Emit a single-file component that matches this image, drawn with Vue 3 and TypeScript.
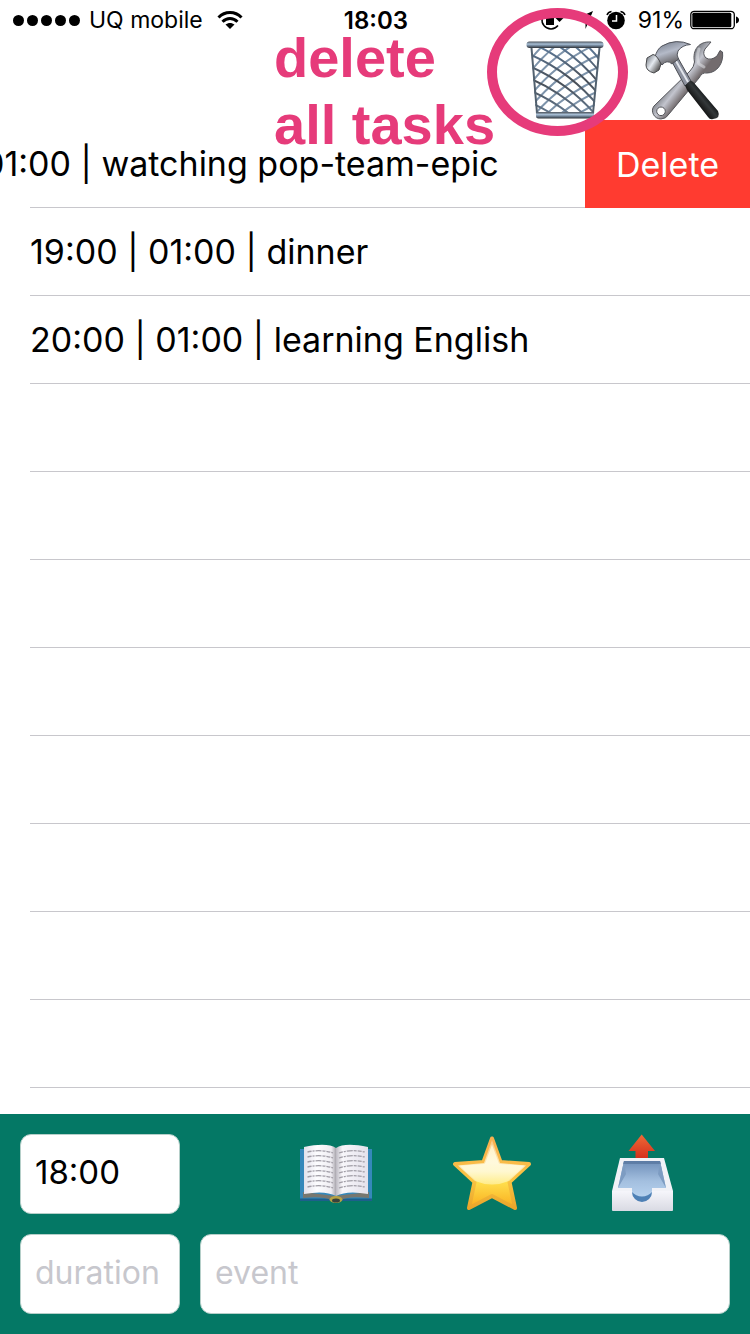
<script setup lang="ts">
import { computed, ref } from 'vue'

interface Task {
  id: number
  start: string
  duration: string
  event: string
}

const VISIBLE_ROWS = 11

const tasks = ref<Task[]>([
  { id: 1, start: '18:00', duration: '01:00', event: 'watching pop-team-epic' },
  { id: 2, start: '19:00', duration: '01:00', event: 'dinner' },
  { id: 3, start: '20:00', duration: '01:00', event: 'learning English' },
])
const swipedId = ref<number | null>(1)
const start = ref('18:00')
const duration = ref('')
const eventName = ref('')

const emptyRows = computed(() => Math.max(0, VISIBLE_ROWS - tasks.value.length))

// Wires of the basket: evenly spaced curves, mirrored for the other direction
const wires = Array.from({ length: 11 }, (_, i) => {
  const y = -46 + i * 12
  return {
    falling: `M4 ${y} Q46 ${y + 18} 75 ${y + 54}`,
    rising: `M76 ${y} Q34 ${y + 18} 5 ${y + 54}`,
  }
})

const pageLines = [19, 24, 29, 34, 39, 44, 49, 54]

function removeTask(id: number) {
  tasks.value = tasks.value.filter((t) => t.id !== id)
}

function clearTasks() {
  tasks.value = []
}

function addTask() {
  if (!eventName.value) return
  tasks.value.push({
    id: Date.now(),
    start: start.value,
    duration: duration.value,
    event: eventName.value,
  })
  eventName.value = ''
}
</script>

<template>
  <div class="screen">
    <header class="header">
      <div class="status">
        <div class="status-left">
          <span class="signal"><i v-for="n in 5" :key="n" class="dot"></i></span>
          <span>UQ mobile</span>
          <svg class="wifi" width="26" height="20" viewBox="0 0 26 20" aria-hidden="true">
            <g fill="none" stroke="#000" stroke-width="3">
              <path d="M1.500 7.500 C8 .8 18 .8 24.500 7.500" />
              <path d="M5.500 11.700 C10 7.300 16 7.300 20.500 11.700" />
            </g>
            <path d="M13 19 L8.500 14.600 C11 12.300 15 12.300 17.500 14.600 Z" />
          </svg>
        </div>
        <span class="clock">18:03</span>
        <div class="status-right">
          <svg width="24" height="24" viewBox="0 0 24 24" aria-hidden="true">
            <path d="M18 17.500 A9 9 0 1 1 19.500 9" fill="none" stroke="#000" stroke-width="1.500" />
            <path d="M15.500 10 H23.500 L19.500 14 Z" />
            <rect x="6" y="9" width="8" height="8" />
            <path d="M7.500 9 V7 A2.500 2.500 0 0 1 12.500 7 V9" fill="none" stroke="#000" stroke-width="1.500" />
          </svg>
          <svg class="arrow" width="20" height="20" viewBox="0 0 20 20" aria-hidden="true">
            <path d="M19 1 L11.500 19 V9 H1 Z" />
          </svg>
          <svg class="alarm" width="20" height="20" viewBox="0 0 20 20" aria-hidden="true">
            <circle cx="10" cy="10.500" r="8.800" />
            <path d="M1 5 Q2 2 5.500 1.500 M19 5 Q18 2 14.500 1.500" fill="none" stroke="#000" stroke-width="1.500" />
            <path d="M10.500 5 V11 H6" fill="none" stroke="#fff" stroke-width="1.500" />
          </svg>
          <span class="percent">91%</span>
          <svg width="49" height="20" viewBox="0 0 49 20" aria-hidden="true">
            <rect x=".8" y="1.300" width="43.500" height="17.400" rx="3.500" fill="none" stroke="#000" stroke-width="1.300" />
            <rect x="2.300" y="2.800" width="39" height="14.400" rx="1.500" />
            <path d="M46 6.500 Q49 7.500 49 10 Q49 12.500 46 13.500 Z" />
          </svg>
        </div>
      </div>

      <div class="actions">
        <button type="button" class="icon-button" aria-label="Delete all tasks" @click="clearTasks">
          <svg width="80" height="80" viewBox="0 0 80 80">
            <defs>
              <linearGradient id="rim" x1="0" y1="0" x2="0" y2="1">
                <stop offset="0" stop-color="#4c535c" />
                <stop offset=".4" stop-color="#a9c0d6" />
                <stop offset=".65" stop-color="#6f8296" />
                <stop offset="1" stop-color="#2f3338" />
              </linearGradient>
              <linearGradient id="wire" gradientUnits="userSpaceOnUse" x1="0" y1="8" x2="0" y2="74">
                <stop offset="0" stop-color="#5d7896" />
                <stop offset=".5" stop-color="#484e56" />
                <stop offset="1" stop-color="#63788e" />
              </linearGradient>
              <clipPath id="basket"><path d="M6 7 H75 L69 74 H11 Z" /></clipPath>
            </defs>
            <g clip-path="url(#basket)" fill="none" stroke-width="2">
              <path v-for="(w, i) in wires" :key="'r' + i" :d="w.rising" stroke="#7d93aa" />
              <path v-for="(w, i) in wires" :key="'f' + i" :d="w.falling" stroke="url(#wire)" />
            </g>
            <path d="M6.500 8 L12 73 M74.500 8 L68 73" fill="none" stroke="#52616f" stroke-width="2" />
            <rect x="11" y="72" width="58" height="6.500" rx="2.500" fill="url(#rim)" />
            <rect x="1.500" y="1.500" width="77" height="6.500" rx="3" fill="url(#rim)" />
          </svg>
        </button>
        <button type="button" class="icon-button" aria-label="Settings">
          <svg width="80" height="80" viewBox="0 0 80 80">
            <defs>
              <linearGradient id="wrench" gradientUnits="userSpaceOnUse" x1="30" y1="38" x2="44" y2="49">
                <stop offset="0" stop-color="#85888f" />
                <stop offset=".45" stop-color="#c3c5ce" />
                <stop offset="1" stop-color="#736c6e" />
              </linearGradient>
              <linearGradient id="hammer" x1="0" y1="0" x2=".5" y2="1">
                <stop offset="0" stop-color="#6c7482" />
                <stop offset=".5" stop-color="#b4bac8" />
                <stop offset="1" stop-color="#5b5757" />
              </linearGradient>
              <linearGradient id="face" x1="0" y1="0" x2="1" y2=".8">
                <stop offset="0" stop-color="#62676f" />
                <stop offset=".5" stop-color="#e5eaf0" />
                <stop offset="1" stop-color="#3a3836" />
              </linearGradient>
              <linearGradient id="grip" gradientUnits="userSpaceOnUse" x1="50" y1="62" x2="60" y2="54">
                <stop offset="0" stop-color="#111" />
                <stop offset=".6" stop-color="#34383a" />
                <stop offset="1" stop-color="#15191a" />
              </linearGradient>
            </defs>
            <path
              d="M66 2 C54 1 47 10 49.500 22 Q49 27 45 31 L9 66 C5 71 9 79 16 79 Q21 79 24 74 L54 38 Q57 32 62 33 C72 33 79 23 77.500 12 L75 10.500 L72 16 Q66 21 61 18 Q57 14 60 9 Z M16 67 A4.300 4.300 0 1 0 16 75.600 A4.300 4.300 0 1 0 16 67 Z"
              fill="url(#wrench)" fill-rule="evenodd" stroke="#55565b" stroke-width="1" stroke-linejoin="round"
            />
            <path d="M54 9 Q51 17 54 24 L59 27" fill="none" stroke="#e6e7ec" stroke-width="3" stroke-linecap="round" opacity=".5" />
            <path d="M26 20 L33 18 L46 41 L40 46 Z" fill="#8d929f" stroke="#4a4c52" stroke-width="1" />
            <path d="M31 21 L43 42" stroke="#e3e6ec" stroke-width="2" />
            <path
              d="M10 17 Q12 9 17 6 Q31 -2 45.500 4.500 Q37 5 33 11 Q31 15 33.500 19 L27 24 Q22 19 17 25 Z"
              fill="url(#hammer)" stroke="#51545c" stroke-width="1" stroke-linejoin="round"
            />
            <path d="M2 18 L8 14.500 Q12 15 16 24 L14 30 L9 33 Q1 31 1 25 Z" fill="url(#face)" stroke="#494a4d" stroke-width="1" stroke-linejoin="round" />
            <path d="M40 45.500 L45.500 40.500 Q48 41 50 44 L73 71 Q76 78 68 79 Q65 80 63 77 L42 50 Z" fill="url(#grip)" />
          </svg>
        </button>
      </div>

      <div class="callout" aria-hidden="true">
        <p class="callout-text">delete<br />all tasks</p>
        <div class="callout-ring"></div>
      </div>
    </header>

    <ul class="tasks">
      <li v-for="task in tasks" :key="task.id" class="row" :class="{ swiped: task.id === swipedId }">
        <span class="row-text">{{ task.start }} | {{ task.duration }} | {{ task.event }}</span>
        <button v-if="task.id === swipedId" type="button" class="delete" @click="removeTask(task.id)">Delete</button>
      </li>
      <li v-for="n in emptyRows" :key="'empty' + n" class="row"></li>
    </ul>

    <form class="editor" @submit.prevent="addTask">
      <input v-model="start" class="field" type="text" aria-label="Start time" />
      <div class="tools">
        <button type="button" class="icon-button" aria-label="Open log">
          <svg width="76" height="80" viewBox="0 0 76 80">
            <defs>
              <linearGradient id="pageLeft" x1="0" y1="0" x2="1" y2="0">
                <stop offset="0" stop-color="#e4e2ec" />
                <stop offset=".4" stop-color="#fdfdff" />
                <stop offset=".85" stop-color="#efedf2" />
                <stop offset="1" stop-color="#a9a6ad" />
              </linearGradient>
              <linearGradient id="pageRight" x1="0" y1="0" x2="1" y2="0">
                <stop offset="0" stop-color="#bdbac2" />
                <stop offset=".2" stop-color="#f8f7fb" />
                <stop offset="1" stop-color="#e3e1eb" />
              </linearGradient>
            </defs>
            <path d="M2 15 H74 V67 H2 Z" fill="#3588ba" />
            <path d="M2 64.500 H74 V67 H2 Z" fill="#1d5f8c" />
            <path d="M5 58 L37 62 L71 58 V64 Q50 62 43 66 H33 Q25 62 5 64 Z" fill="#77776f" />
            <ellipse cx="38" cy="65.500" rx="6.500" ry="3.500" fill="#b6a244" />
            <ellipse cx="38" cy="66.500" rx="4" ry="2" fill="#38413d" />
            <path d="M6 13 Q29 8 38 14 V62 Q27 56 6 60 Z" fill="url(#pageLeft)" />
            <path d="M38 14 Q47 8 70 13 V60 Q49 56 38 62 Z" fill="url(#pageRight)" />
            <g fill="none" stroke="#a19ea7" stroke-width="1.300" stroke-dasharray="4 1 2 1 6 1 3 1">
              <path v-for="y in pageLines" :key="y" :d="`M9.500 ${y - 1} Q23 ${y - 4} 35 ${y} M41 ${y} Q53 ${y - 4} 67 ${y - 1}`" />
            </g>
          </svg>
        </button>
        <button type="button" class="icon-button" aria-label="Favourites">
          <svg width="80" height="80" viewBox="0 0 80 80">
            <defs>
              <linearGradient id="starFill" x1="0" y1="0" x2="0" y2="1">
                <stop offset="0" stop-color="#ffe39a" />
                <stop offset=".35" stop-color="#fff3c0" />
                <stop offset=".62" stop-color="#ffe04e" />
                <stop offset="1" stop-color="#f9ad1d" />
              </linearGradient>
              <linearGradient id="starEdge" x1="0" y1="0" x2="0" y2="1">
                <stop offset="0" stop-color="#f8b050" />
                <stop offset=".6" stop-color="#fac442" />
                <stop offset="1" stop-color="#e9a52a" />
              </linearGradient>
              <linearGradient id="starShine" x1="0" y1="0" x2="0" y2="1">
                <stop offset="0" stop-color="#fff" stop-opacity=".3" />
                <stop offset=".7" stop-color="#fffbe2" stop-opacity=".8" />
                <stop offset="1" stop-color="#fff6b8" stop-opacity=".6" />
              </linearGradient>
            </defs>
            <path
              d="M40 4.500 L48.500 28 L77 30 L57.500 48 L63 74 L40 62 L17 74 L22.500 48 L3 30 L31.500 28 Z"
              fill="url(#starFill)" stroke="url(#starEdge)" stroke-width="4" stroke-linejoin="round"
            />
            <path d="M40 6 L48 29 L74 31.500 L57 47 Q40 54 23 47 L6 31.500 L32 29 Z" fill="url(#starShine)" />
          </svg>
        </button>
        <button type="submit" class="icon-button" aria-label="Add task">
          <svg width="64" height="80" viewBox="0 0 64 80">
            <defs>
              <linearGradient id="up" x1="0" y1="0" x2="0" y2="1">
                <stop offset="0" stop-color="#ee6a36" />
                <stop offset="1" stop-color="#d42d1c" />
              </linearGradient>
              <linearGradient id="well" x1="0" y1="0" x2="0" y2="1">
                <stop offset="0" stop-color="#6f8fb9" />
                <stop offset=".5" stop-color="#a3bfdf" />
                <stop offset="1" stop-color="#bbd6f2" />
              </linearGradient>
              <linearGradient id="front" x1="0" y1="0" x2="0" y2="1">
                <stop offset="0" stop-color="#f6f6fb" />
                <stop offset="1" stop-color="#d9dae3" />
              </linearGradient>
            </defs>
            <path d="M31.700 .5 L45 17 H38 V25 H25.500 V17 H18.500 Z" fill="url(#up)" />
            <path d="M10 24 H54 L63 57 V76 L62 77 H3 L2 76 V57 Z" fill="#f1f2f7" />
            <path d="M2 57 H63 V76 L62 77 H3 L2 76 Z" fill="url(#front)" />
            <path d="M14 27 H50 L56 54 H42 V57 A10 10 0 0 1 22 57 V54 H8 Z" fill="url(#well)" />
            <path d="M14 27 L16 40 L8 54 Z M50 27 L48 40 L56 54 Z" fill="#7d9cc2" />
            <path d="M14 27 H50 L51 30 H13 Z" fill="#49688f" opacity=".5" />
            <path d="M22 58 A10 10 0 0 0 42 58 A12 10 0 0 1 22 58 Z" fill="#4e80b5" />
          </svg>
        </button>
      </div>
      <input v-model="duration" class="field" type="text" placeholder="duration" aria-label="Duration" />
      <input v-model="eventName" class="field" type="text" placeholder="event" aria-label="Event" />
    </form>
  </div>
</template>

<style>
body {
  margin: 0;
  background: #fff;
}
</style>

<style scoped>
.screen {
  display: flex;
  flex-direction: column;
  min-height: 100vh;
  overflow: hidden;
  color: #000;
  background: #fff;
  font-family: Inter, "Liberation Sans", sans-serif;
}

.header {
  position: relative;
}

.status {
  display: grid;
  grid-template-columns: 1fr auto 1fr;
  align-items: center;
  height: 40px;
  padding: 0 11px 0 13px;
  font-size: 23px;
}

.status-left,
.status-right {
  display: flex;
  align-items: center;
}

.status-right {
  justify-content: flex-end;
}

.signal {
  display: flex;
  gap: 3px;
  margin-right: 9px;
}

.dot {
  width: 11px;
  height: 11px;
  border-radius: 50%;
  background: #000;
}

.wifi {
  margin-left: 14px;
}

.clock {
  font-size: 24px;
  font-weight: 600;
}

.arrow {
  margin: 0 12px 0 10px;
}

.alarm {
  margin-right: 12px;
}

.percent {
  margin-right: 6px;
}

.actions {
  display: flex;
  justify-content: flex-end;
  gap: 40px;
  padding-right: 25px;
}

.icon-button {
  display: block;
  padding: 0;
  border: 0;
  background: none;
  cursor: pointer;
}

.icon-button svg {
  display: block;
}

.callout {
  position: absolute;
  top: 8px;
  right: 122px;
  z-index: 1;
  display: flex;
  align-items: flex-start;
  color: #e63b7a;
  pointer-events: none;
}

.callout-text {
  width: 213px;
  margin: 16px 0 0;
  font: bold 56px/67px "Liberation Sans", sans-serif;
  white-space: nowrap;
}

.callout-ring {
  box-sizing: border-box;
  width: 141px;
  height: 128px;
  border: 10px solid currentColor;
  border-radius: 50%;
}

.tasks {
  flex: 1;
  margin: 0;
  padding: 0 0 26px;
  list-style: none;
}

.row {
  display: flex;
  height: 88px;
  overflow: hidden;
  background: linear-gradient(#c8c7cc, #c8c7cc) right bottom / calc(100% - 30px) 1px no-repeat;
}

.row.swiped {
  justify-content: flex-end;
}

.row-text {
  box-sizing: border-box;
  flex: none;
  width: 100%;
  padding-left: 30px;
  font-size: 34px;
  line-height: 88px;
  white-space: nowrap;
}

.delete {
  flex: none;
  width: 165px;
  padding: 0;
  border: 0;
  color: #fff;
  background: #ff3b30;
  font: inherit;
  font-size: 34px;
  cursor: pointer;
}

.editor {
  display: grid;
  grid-template-columns: 160px 1fr;
  gap: 20px;
  padding: 20px;
  background: #047865;
}

.tools {
  display: flex;
  justify-content: space-between;
  padding: 0 56px 0 98px;
}

.field {
  box-sizing: border-box;
  width: 100%;
  min-width: 0;
  height: 80px;
  padding: 0 14px 4px;
  border: 1px solid #b5cfc9;
  border-radius: 11px;
  color: #000;
  background: #fff;
  font: inherit;
  font-size: 33px;
}

.field::placeholder {
  color: #c7c7cd;
  font-size: 32px;
  opacity: 1;
}
</style>
